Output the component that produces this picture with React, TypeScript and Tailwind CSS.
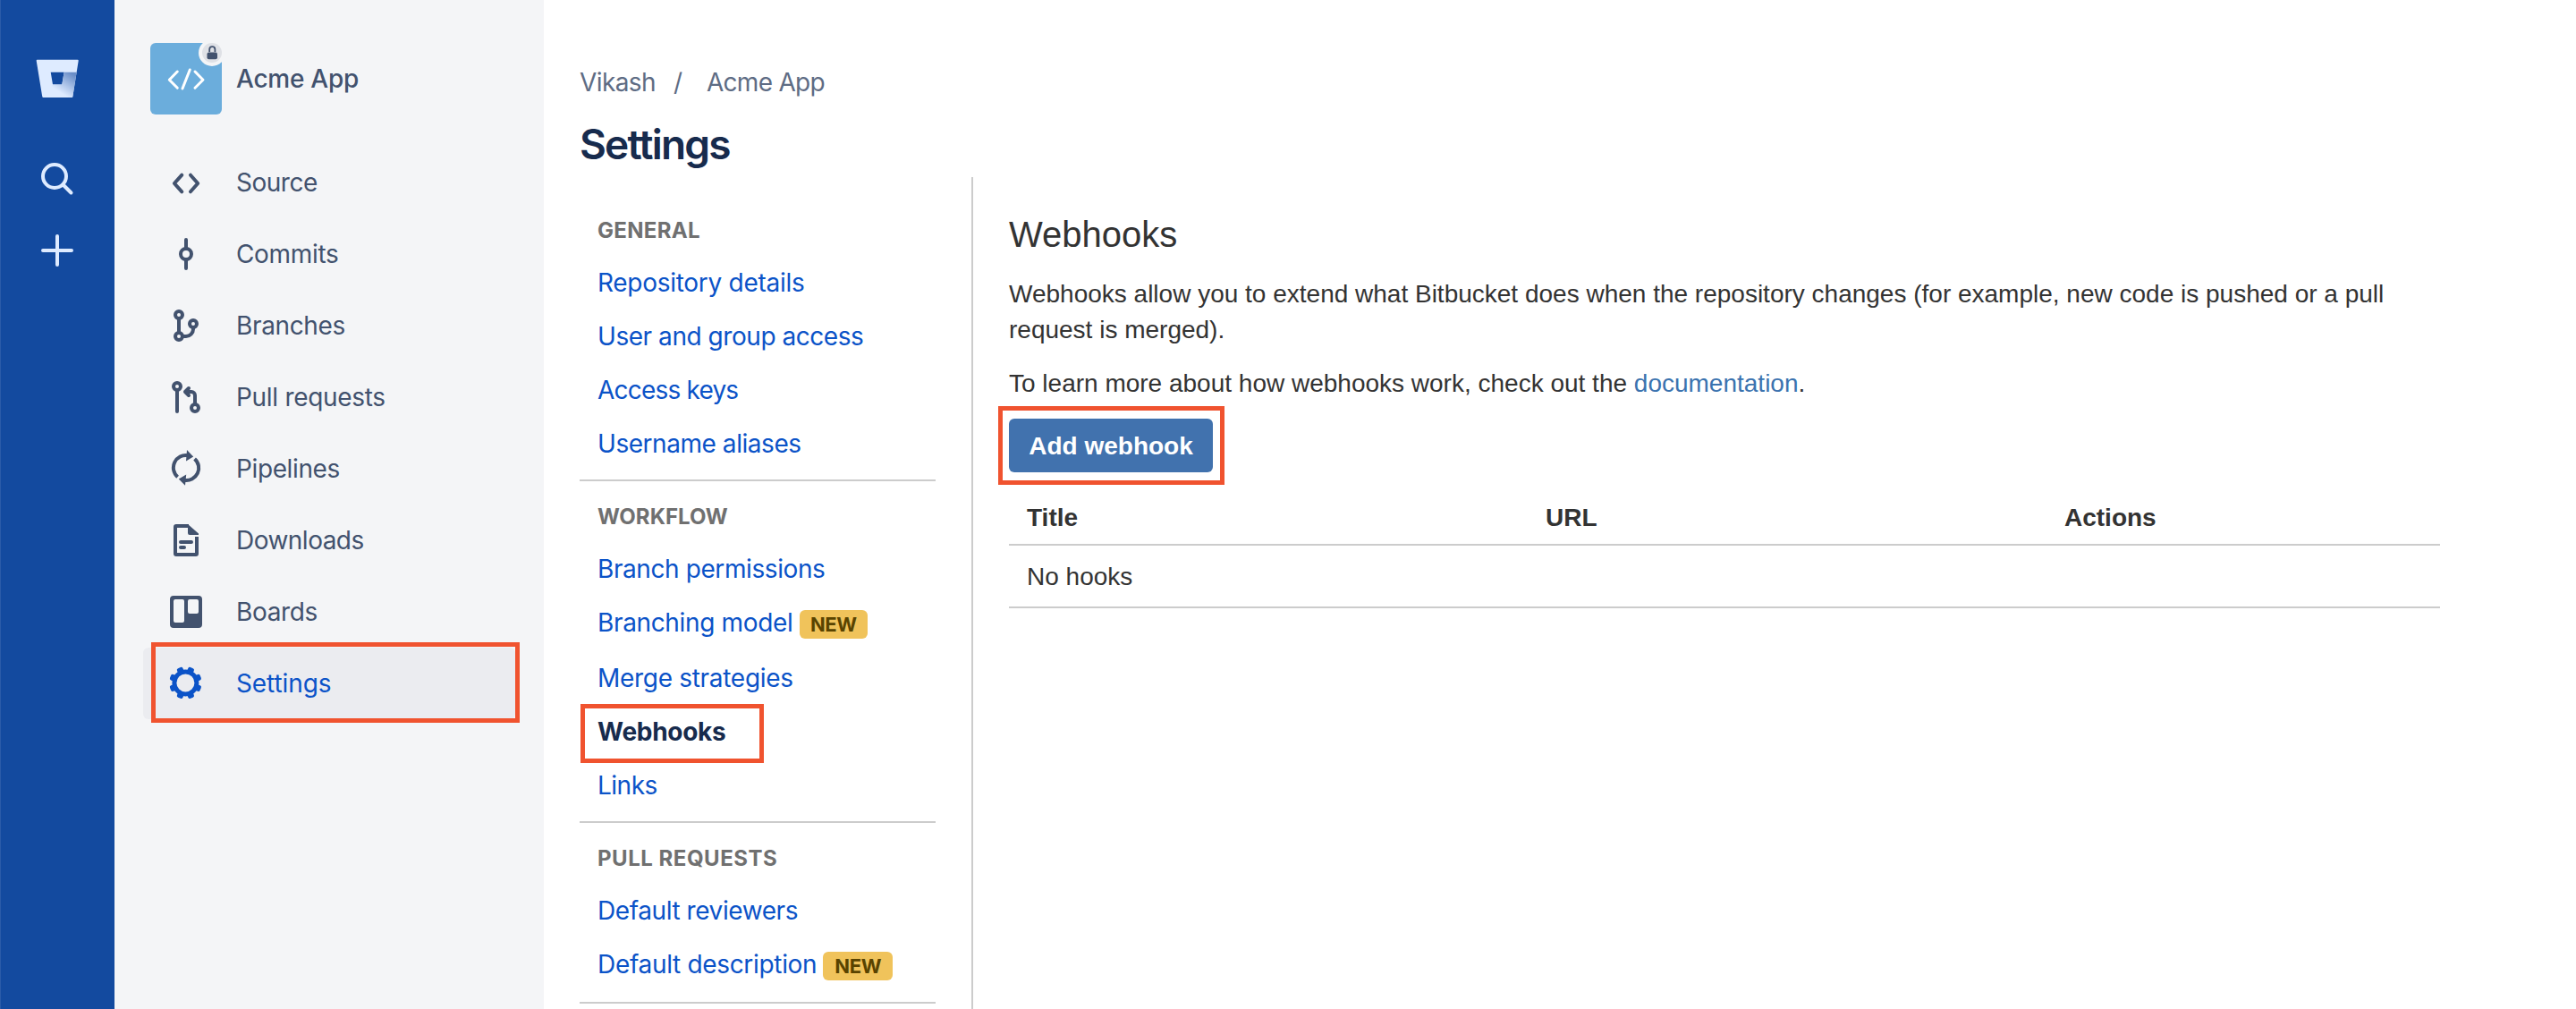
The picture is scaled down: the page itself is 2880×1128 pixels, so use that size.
import type { ReactNode } from "react";

type NavItem = { label: string; icon: ReactNode; tracking: string; active?: boolean };
type Link = { label: string; tracking: string; badge?: string; current?: boolean };

function Icon({ children }: { children: ReactNode }) {
  return (
    <svg
      viewBox="0 0 48 48"
      className="size-12 shrink-0"
      fill="none"
      stroke="currentColor"
      strokeWidth={4}
      strokeLinecap="round"
      strokeLinejoin="round"
    >
      {children}
    </svg>
  );
}

const gearTeeth = [22.5, 67.5, 112.5, 157.5, 202.5, 247.5, 292.5, 337.5];

const navItems: NavItem[] = [
  {
    label: "Source",
    tracking: "tracking-[-0.48px]",
    icon: (
      <Icon>
        <path d="M19.3 15.7 10.9 25l8.4 9.3M29 15.7 37.2 25 29 34.3" />
      </Icon>
    ),
  },
  {
    label: "Commits",
    tracking: "tracking-[-0.33px]",
    icon: (
      <Icon>
        <circle cx="24" cy="24" r="6" />
        <path d="M24 8v10M24 30v10" />
      </Icon>
    ),
  },
  {
    label: "Branches",
    tracking: "tracking-[-0.35px]",
    icon: (
      <Icon>
        <circle cx="16" cy="12" r="4" />
        <circle cx="32" cy="22" r="4" />
        <circle cx="16" cy="36" r="4" />
        <path d="M16 16v16M20 36h4a8 8 0 0 0 8-8v-2" />
      </Icon>
    ),
  },
  {
    label: "Pull requests",
    tracking: "tracking-[-0.3px]",
    icon: (
      <Icon>
        <circle cx="14" cy="12" r="4" />
        <circle cx="34" cy="36" r="4" />
        <path d="M14 16v24M34 32V22a4 4 0 0 0-4-4h-7M27 14l-4 4 4 4" />
      </Icon>
    ),
  },
  {
    label: "Pipelines",
    tracking: "tracking-[-0.38px]",
    icon: (
      <Icon>
        <g strokeLinecap="butt">
          <path d="M14.6 33.2A13.8 13.8 0 0 1 26 9.2" />
          <path d="M33.6 12.9A13.8 13.8 0 0 1 22 36.8" />
        </g>
        <path
          d="M25 3l7.2 7.6L24 15.6zM23 42.8l-7.2-7.4 8.4-5z"
          fill="currentColor"
          stroke="none"
        />
      </Icon>
    ),
  },
  {
    label: "Downloads",
    tracking: "tracking-[-0.52px]",
    icon: (
      <Icon>
        <path d="M27 8H13a1 1 0 0 0-1 1v30a1 1 0 0 0 1 1h22a1 1 0 0 0 1-1V20" strokeLinecap="butt" />
        <path d="M26 6l12 10.5V18H28a2 2 0 0 1-2-2z" fill="currentColor" stroke="none" />
        <path d="M18 26h12M18 32h4" />
      </Icon>
    ),
  },
  {
    label: "Boards",
    tracking: "tracking-[-0.35px]",
    icon: (
      <Icon>
        <path
          fillRule="evenodd"
          stroke="none"
          fill="currentColor"
          d="M10 6h28a4 4 0 0 1 4 4v28a4 4 0 0 1-4 4H10a4 4 0 0 1-4-4V10a4 4 0 0 1 4-4zM12 10a2 2 0 0 0-2 2v22a2 2 0 0 0 2 2h8a2 2 0 0 0 2-2V12a2 2 0 0 0-2-2zM28 10a2 2 0 0 0-2 2v12a2 2 0 0 0 2 2h8a2 2 0 0 0 2-2V12a2 2 0 0 0-2-2z"
        />
      </Icon>
    ),
  },
  {
    label: "Settings",
    tracking: "tracking-[-0.1px]",
    active: true,
    icon: (
      <Icon>
        <circle cx="23.4" cy="23.4" r="12.5" strokeWidth={5} />
        <g fill="currentColor" stroke="none">
          {gearTeeth.map((a) => (
            <rect
              key={a}
              x="19.9"
              y="5.2"
              width="7"
              height="7"
              rx="2"
              transform={`rotate(${a} 23.4 23.4)`}
            />
          ))}
        </g>
      </Icon>
    ),
  },
];

const sections: { title: string; tracking: string; links: Link[] }[] = [
  {
    title: "GENERAL",
    tracking: "tracking-[0.31px]",
    links: [
      { label: "Repository details", tracking: "tracking-[-0.28px]" },
      { label: "User and group access", tracking: "tracking-[-0.45px]" },
      { label: "Access keys", tracking: "tracking-[-0.8px]" },
      { label: "Username aliases", tracking: "tracking-[-0.45px]" },
    ],
  },
  {
    title: "WORKFLOW",
    tracking: "tracking-[0.02px]",
    links: [
      { label: "Branch permissions", tracking: "tracking-[-0.41px]" },
      { label: "Branching model", tracking: "tracking-[-0.35px]", badge: "ml-[7.5px] w-[76px] pl-3" },
      { label: "Merge strategies", tracking: "tracking-[-0.3px]" },
      { label: "Webhooks", tracking: "tracking-[-0.28px]", current: true },
      { label: "Links", tracking: "tracking-[-0.51px]" },
    ],
  },
  {
    title: "PULL REQUESTS",
    tracking: "tracking-[0.52px]",
    links: [
      { label: "Default reviewers", tracking: "tracking-[-0.42px]" },
      { label: "Default description", tracking: "tracking-[-0.32px]", badge: "ml-[7px] w-[78px] pl-[13px]" },
    ],
  },
];

function Rail() {
  return (
    <div className="flex w-32 shrink-0 flex-col items-center border-l border-[#2a5ba9] bg-[#134a9f] pt-16 pr-px text-[#deebff]">
      <svg viewBox="0 0 48 48" className="size-12">
        <defs>
          <linearGradient id="bucket" x1="42" y1="16" x2="27" y2="39" gradientUnits="userSpaceOnUse">
            <stop offset="0.1" stopColor="#6a8ec8" />
            <stop offset="1" stopColor="#deebff" />
          </linearGradient>
        </defs>
        <path
          fill="currentColor"
          fillRule="evenodd"
          d="M1.7 2.7h45a1 1 0 0 1 1 1.2l-6.4 40a1.2 1.2 0 0 1-1.2 1.1H8.6a1.4 1.4 0 0 1-1.4-1.2L.7 3.9a1 1 0 0 1 1-1.200zM16.7 16.800l2.300 13.700h10.300l2.300-13.700z"
        />
        <path fill="url(#bucket)" d="M45.600 16.800H31.700l-2.400 13.700H19l-11.200 14c.3.300.5.500.9.500h31.400c.6 0 1.100-.4 1.200-1z" />
      </svg>
      <svg
        viewBox="0 0 48 48"
        className="mt-16 size-12"
        fill="none"
        stroke="currentColor"
        strokeWidth={4}
        strokeLinecap="round"
      >
        <circle cx="21" cy="21" r="13" />
        <path d="M31 31l8.500 8.500" />
      </svg>
      <svg
        viewBox="0 0 48 48"
        className="mt-8 size-12"
        fill="none"
        stroke="currentColor"
        strokeWidth={4}
        strokeLinecap="round"
      >
        <path d="M24 8v32M8 24h32" />
      </svg>
    </div>
  );
}

function Sidebar() {
  return (
    <div className="w-[480px] shrink-0 bg-[#f4f5f7] px-8 pt-12 text-[#42526e]">
      <div className="flex h-20 items-center pl-2">
        <svg viewBox="0 0 80 80" className="size-20 shrink-0">
          <rect width="80" height="80" rx="6" fill="#6baddc" />
          <circle cx="69" cy="11" r="15" fill="#f4f5f7" />
          <path d="M69 0h11v11z" fill="#f4f5f7" />
          <circle cx="69" cy="11" r="11" fill="#dfe1e6" />
          <rect x="63.500" y="10.600" width="11.500" height="7.600" rx="2" fill="#42526e" />
          <path d="M66.200 10V7.300a3.100 3.100 0 0 1 6.200 0V10" fill="none" stroke="#42526e" strokeWidth="1.800" />
          <path
            d="M30.300 32l-9 9.300 9 9M44.300 30 36 51M50 32l9 9.300-9 9"
            fill="none"
            stroke="#fff"
            strokeWidth="3"
            strokeLinecap="round"
            strokeLinejoin="round"
          />
        </svg>
        <span className="ml-4 font-medium tracking-[-0.25px]">Acme App</span>
      </div>
      <div className="mt-9 flex flex-col">
        {navItems.map((item) => (
          <div
            key={item.label}
            className={
              item.active
                ? "relative flex h-20 items-center gap-8 rounded-md bg-[#ebecf0] pl-6 text-[#0b53c8]"
                : "flex h-20 items-center gap-8 pl-6"
            }
          >
            {item.icon}
            <span className={item.tracking}>{item.label}</span>
            {item.active && (
              <div className="absolute -top-[6px] -right-[5px] -bottom-[4px] left-[9px] border-[5px] border-[#f0532f]" />
            )}
          </div>
        ))}
      </div>
    </div>
  );
}

function SettingsNav() {
  return (
    <div className="w-[398px] shrink-0 pt-5">
      {sections.map((s) => (
        <div key={s.title} className="border-b-2 border-[#ccc] pt-5 pb-[10px] pl-5">
          <div className={`mb-2 text-[24px] leading-10 font-bold text-[#707070] ${s.tracking}`}>{s.title}</div>
          {s.links.map((l) => (
            <div
              key={l.label}
              className={
                l.badge
                  ? "flex h-[62px] items-start leading-[60px] text-[#0b53c8]"
                  : l.current
                    ? "relative h-[60px] leading-[60px] font-bold text-[#172b4d]"
                    : "h-[60px] leading-[60px] text-[#0b53c8]"
              }
            >
              <span className={l.tracking}>{l.label}</span>
              {l.badge && (
                <span
                  className={`mt-4 h-8 rounded-md bg-[#f0c35b] text-[22px] leading-8 font-bold tracking-[-0.4px] text-[#594300] ${l.badge}`}
                >
                  NEW
                </span>
              )}
              {l.current && (
                <div className="absolute -top-[1px] -left-[19px] h-[66px] w-[205px] border-[5px] border-[#f0532f]" />
              )}
            </div>
          ))}
        </div>
      ))}
    </div>
  );
}

function Webhooks() {
  return (
    <div className="ml-10 w-[1642px] border-l-2 border-[#ccc] pt-11 pl-10 font-['Liberation_Sans',Arial,sans-serif] leading-10 text-[#333]">
      <h2 className="text-[40px] leading-10">Webhooks</h2>
      <p className="mt-[27px]">
        Webhooks allow you to extend what Bitbucket does when the repository changes (for example, new code is pushed or
        a pull request is merged).
      </p>
      <p className="mt-5">
        To learn more about how webhooks work, check out the <a className="text-[#3b73af]">documentation</a>.
      </p>
      <div className="relative mt-[19px] w-[228px]">
        <button className="block h-[60px] w-[228px] rounded-md bg-[#4172ae] pt-[11px] pb-[9px] leading-10 font-bold whitespace-nowrap text-white">
          Add webhook
        </button>
        <div className="absolute -top-[14px] -left-3 h-[88px] w-[253px] border-[5px] border-[#f0532f]" />
      </div>
      <div className="mt-[31px] grid grid-cols-[580px_580px_1fr] border-b-2 border-[#ccc] pb-[9px] pl-5 font-bold">
        <div>Title</div>
        <div>URL</div>
        <div>Actions</div>
      </div>
      <div className="border-b-2 border-[#ccc] pt-[15px] pb-[13px] pl-5">No hooks</div>
    </div>
  );
}

export default function App() {
  return (
    <div className="flex h-[1128px] w-[2880px] overflow-hidden bg-white font-['Inter',sans-serif] text-[28px] leading-10">
      <Rail />
      <Sidebar />
      <div className="flex flex-1 flex-col pt-[72px] pl-10">
        <div className="flex text-[#5e6c84]">
          <span className="tracking-[-0.59px]">Vikash</span>
          <span className="ml-[20px] w-[37px]">/</span>
          <span className="tracking-[-0.72px]">Acme App</span>
        </div>
        <h1 className="mt-[21px] text-[46px] leading-14 font-semibold tracking-[-1.85px] text-[#172b4d]">Settings</h1>
        <div className="mt-[9px] flex min-h-0 flex-1">
          <SettingsNav />
          <Webhooks />
        </div>
      </div>
    </div>
  );
}
